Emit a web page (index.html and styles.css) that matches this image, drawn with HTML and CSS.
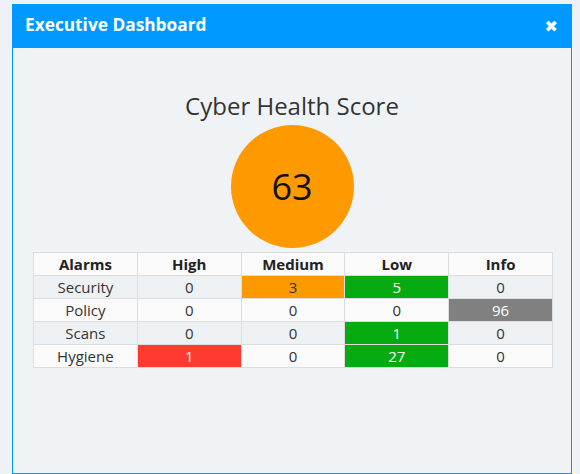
FILE: index.html
```html
<!DOCTYPE html>
<html>
<head>
<meta charset="utf-8">
<link rel="stylesheet" href="styles.css">
</head>
<body>
<div class="panel">
  <div class="panel-header">
    <span class="panel-title">Executive Dashboard</span>
    <span class="close">&#10006;</span>
  </div>
  <div class="panel-body">
    <div class="score-title">Cyber Health Score</div>
    <div class="score-circle">63</div>
    <table class="alarms">
      <thead>
        <tr><th>Alarms</th><th>High</th><th>Medium</th><th>Low</th><th>Info</th></tr>
      </thead>
      <tbody>
        <tr><td>Security</td><td>0</td><td class="orange">3</td><td class="green">5</td><td>0</td></tr>
        <tr><td>Policy</td><td>0</td><td>0</td><td>0</td><td class="grey">96</td></tr>
        <tr><td>Scans</td><td>0</td><td>0</td><td class="green">1</td><td>0</td></tr>
        <tr><td>Hygiene</td><td class="red">1</td><td>0</td><td class="green">27</td><td>0</td></tr>
      </tbody>
    </table>
  </div>
</div>
</body>
</html>
```
FILE: styles.css
```css
html, body {
  margin: 0;
  padding: 0;
  background: #eef2f6;
  font-family: "Open Sans", "Liberation Sans", sans-serif;
}
body {
  padding: 4px 0 0 12px;
}
.panel {
  width: 560px;
  height: 470px;
  box-sizing: border-box;
  border: 1px solid #0099ff;
  border-top: none;
  background: #eff3f6;
  display: flex;
  flex-direction: column;
}
.panel-header {
  height: 44px;
  margin: 0 -1px;
  background: #0099ff;
  color: #fff;
  display: flex;
  align-items: center;
  justify-content: space-between;
  padding: 0 14px 4px 13px;
  box-sizing: border-box;
}
.panel-title {
  font-weight: 700;
  font-size: 17.3px;
}
.close {
  font-size: 16px;
  font-weight: 700;
  font-family: "DejaVu Sans", sans-serif;
  margin-top: 4px;
}
.panel-body {
  display: flex;
  flex-direction: column;
  align-items: center;
  padding-top: 42px;
}
.score-title {
  font-size: 24px;
  line-height: 32px;
  color: #333;
}
.score-circle {
  width: 123px;
  height: 123px;
  border-radius: 50%;
  background: #ff9900;
  color: #111;
  font-size: 36px;
  display: flex;
  align-items: center;
  justify-content: center;
  margin-top: 3px;
}
.alarms {
  margin-top: 4px;
  margin-left: 20px;
  align-self: flex-start;
  width: 520px;
  border-collapse: collapse;
  table-layout: fixed;
  font-size: 15px;
  color: #333;
}
.alarms th, .alarms td {
  border: 1px solid #dddddd;
  text-align: center;
  height: 22px;
  padding: 0;
  line-height: 20px;
}
.alarms th {
  background: #fafafa;
  font-weight: 700;
  color: #222;
}
.alarms tbody tr:nth-child(odd) td {
  background: #eef1f4;
}
.alarms tbody tr:nth-child(even) td {
  background: #fafafa;
}
.alarms tbody tr td.orange { background: #ff9900; color: #333; }
.alarms tbody tr td.green { background: #05ab10; color: #fff; }
.alarms tbody tr td.red { background: #ff3b30; color: #fff; }
.alarms tbody tr td.grey { background: #808080; color: #fff; }
```
